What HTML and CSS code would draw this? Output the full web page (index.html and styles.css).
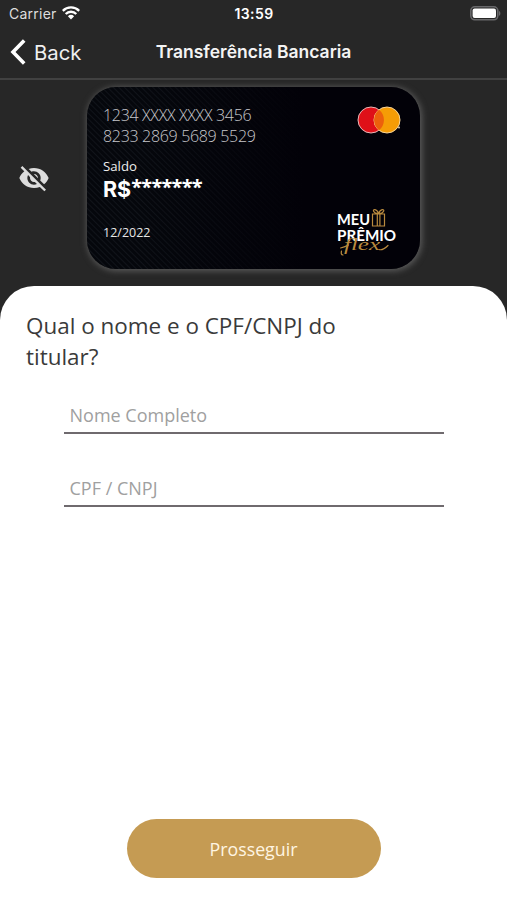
FILE: index.html
```html
<!DOCTYPE html>
<html lang="pt-BR">
<head>
    <meta charset="UTF-8">
    <meta name="viewport" content="width=device-width, initial-scale=1.0">
    <title>Transferência Bancaria</title>
    <link rel="stylesheet" href="styles.css">
</head>
<body>

    <!-- STATUS BAR -->
    <div class="status-bar">
        <div class="carrier">
            <span class="carrier-name">Carrier</span>
            <svg class="wifi" width="18" height="14" viewBox="0 0 18 14">
                <path d="M0.8 4.8a11.6 11.6 0 0 1 16.4 0M3.7 8a7.5 7.5 0 0 1 10.6 0" fill="none" stroke="#fff" stroke-width="2.4"/>
                <path d="M5.9 10.3a4.5 4.5 0 0 1 6.2 0L9 13.5z" fill="#fff"/>
            </svg>
        </div>
        <div class="clock">13:59</div>
        <svg class="battery" width="31" height="15" viewBox="0 0 31 15">
            <rect x="0.8" y="0.8" width="27" height="13" rx="4" fill="none" stroke="#68686a" stroke-width="1.6"/>
            <rect x="2.6" y="2.5" width="23.4" height="9.6" rx="2" fill="#fff"/>
            <path d="M29 5c1.8.6 1.8 4.2 0 4.8z" fill="#68686a"/>
        </svg>
    </div>

    <!-- NAVIGATION -->
    <div class="nav-bar">
        <div class="back">
            <svg width="17" height="28" viewBox="0 0 17 28">
                <path d="M14.2 2.5L3 14l11.2 11.5" fill="none" stroke="#fff" stroke-width="3.6"/>
            </svg>
            <span class="back-text">Back</span>
        </div>
        <h1>Transferência Bancaria</h1>
    </div>

    <!-- CARD -->
    <div class="card-area">
        <svg class="eye" width="32" height="32" viewBox="0 0 24 24" fill="#dcdcdc">
            <path d="M12 7c2.76 0 5 2.24 5 5 0 .65-.13 1.26-.36 1.83l2.92 2.92c1.51-1.26 2.7-2.89 3.43-4.75-1.73-4.39-6-7.5-11-7.5-1.4 0-2.74.25-3.98.7l2.16 2.16C10.74 7.13 11.35 7 12 7zM2 4.27l2.28 2.28.46.46C3.08 8.3 1.78 10.02 1 12c1.73 4.39 6 7.5 11 7.5 1.55 0 3.03-.3 4.38-.84l.42.42L19.73 22 21 20.73 3.27 3 2 4.27zM7.53 9.8l1.55 1.55c-.05.21-.08.43-.08.65 0 1.66 1.34 3 3 3 .22 0 .44-.03.65-.08l1.55 1.55c-.67.33-1.41.53-2.2.53-2.76 0-5-2.24-5-5 0-.79.2-1.53.53-2.2zm4.31-.78l3.15 3.15.02-.16c0-1.66-1.34-3-3-3l-.17.01z"/>
        </svg>
        <div class="card">
            <div class="card-info">
                <div class="card-number">1234 XXXX XXXX 3456</div>
                <div class="card-number">8233 2869 5689 5529</div>
                <div class="balance-label">Saldo</div>
                <div class="balance">R$<span class="stars">*******</span></div>
                <div class="expiry">12/2022</div>
            </div>
            <div class="card-brands">
                <svg class="mastercard" width="44" height="28" viewBox="0 0 44 28">
                    <circle cx="14" cy="14" r="13" fill="#df1018" stroke="#e8b8b8" stroke-width="1"/>
                    <circle cx="30" cy="14" r="13" fill="#f59c06" stroke="#f8d59a" stroke-width="1"/>
                    <path d="M22 3.8a13 13 0 0 1 0 20.4a13 13 0 0 1 0-20.4z" fill="#ec600c"/>
                    <circle cx="42" cy="21.5" r="0.9" fill="#f3dfbf"/>
                </svg>
                <svg class="premio" width="62" height="50" viewBox="0 0 62 50">
                    <g class="premio-text">
                        <text x="1" y="16" textLength="33" lengthAdjust="spacingAndGlyphs">MEU</text>
                        <text x="1" y="32" textLength="59" lengthAdjust="spacingAndGlyphs">PRÊMIO</text>
                    </g>
                    <g fill="none" stroke="#b98a3e" stroke-width="1.2" stroke-linecap="round">
                        <path d="M36.5 5h12v12h-12zM41.3 5v12M43.9 5v12M42.6 4.5c-2-5-6-4.5-5-2.2s4 2.2 5 2.2c2-5 6-4.5 5-2.2s-4 2.2-5 2.2"/>
                        <path d="M4.500 39c5-1 6-2 8-3M7 46c-2 0-2-2-1.500-4M43 40.500c3 1 6-1 9-4"/>
                    </g>
                    <text class="flex-text" x="8" y="41" textLength="36" lengthAdjust="spacingAndGlyphs">flex</text>
                </svg>
            </div>
        </div>
    </div>

    <!-- FORM -->
    <div class="sheet">
        <h2>Qual o nome e o CPF/CNPJ do titular?</h2>
        <input type="text" class="field" placeholder="Nome Completo">
        <input type="text" class="field" placeholder="CPF / CNPJ">
        <button class="submit-button">Prosseguir</button>
    </div>

</body>
</html>
```

FILE: styles.css
```css
* {
    box-sizing: border-box;
}
body {
    font-family: "Open Sans", "Noto Sans", sans-serif;
    margin: 0;
    background-color: #272727;
    height: 900px;
    display: flex;
    flex-direction: column;
    overflow: hidden;
}
.status-bar {
    height: 28px;
    padding: 0 6px 2px 9px;
    display: grid;
    grid-template-columns: 1fr auto 1fr;
    align-items: center;
    font-family: Inter, sans-serif;
    color: #fff;
}
.carrier {
    display: flex;
    align-items: center;
    gap: 5px;
    font-size: 14px;
    color: #dedede;
}
.carrier-name {
    letter-spacing: 0.25px;
}
.clock {
    font-size: 14px;
    font-weight: 600;
    letter-spacing: 0.4px;
    margin-right: 2px;
}
.battery {
    justify-self: end;
}
.nav-bar {
    height: 52px;
    padding: 0 10px 3px;
    border-bottom: 2px solid #414141;
    display: grid;
    grid-template-columns: 1fr auto 1fr;
    align-items: center;
    font-family: Inter, sans-serif;
    color: #fff;
}
.back {
    display: flex;
    align-items: center;
    gap: 7px;
    padding-top: 1px;
}
.back-text {
    font-size: 20.3px;
    color: #f0f0f0;
}
h1 {
    margin: 0;
    font-size: 17.5px;
    font-weight: 600;
    color: #f4f4f4;
}
.card-area {
    height: 206px;
    padding: 7px 0 0 18px;
    display: flex;
    align-items: flex-start;
    gap: 37px;
}
.eye {
    margin-top: 75px;
}
.card {
    width: 333px;
    height: 182px;
    padding: 18px 19px 10px 16px;
    border-radius: 29px;
    display: flex;
    justify-content: space-between;
    background: linear-gradient(90deg, rgba(2, 1, 8, 0) 15%, #020108 65%), repeating-linear-gradient(45deg, #05070c 0, #05070c 2px, #11141a 3px, #05070c 4px);
    box-shadow: 1px 1px 6px 1px #5c5c5c;
    color: #fff;
}
.card-info {
    display: flex;
    flex-direction: column;
    white-space: nowrap;
}
.card-number {
    font-size: 16px;
    font-weight: 300;
    line-height: 21px;
    letter-spacing: -0.32px;
    color: #c8c8cc;
}
.balance-label {
    margin-top: 10px;
    font-size: 13.2px;
    line-height: 18px;
    color: #eee;
}
.balance {
    display: flex;
    font-family: Inter, sans-serif;
    font-size: 21.5px;
    font-weight: 700;
    line-height: 28px;
}
.stars {
    margin-top: -2px;
    font-family: "Open Sans", sans-serif;
    font-size: 20px;
    letter-spacing: -0.8px;
}
.expiry {
    margin-top: 21px;
    font-size: 12.5px;
    line-height: 17px;
    color: #e6e6e6;
}
.card-brands {
    display: flex;
    flex-direction: column;
    justify-content: space-between;
    align-items: flex-end;
}
.mastercard {
    margin-top: 1px;
}
.premio {
    margin-right: 3px;
}
.premio-text {
    font-family: Lato, sans-serif;
    font-size: 16px;
    font-weight: 700;
    fill: #fff;
}
.flex-text {
    font-family: "Liberation Serif", serif;
    font-size: 16px;
    font-style: italic;
    fill: #b98a3e;
}
.sheet {
    flex: 1;
    padding: 25px 26px 22px;
    border-radius: 34px 34px 0 0;
    background-color: #fff;
    display: flex;
    flex-direction: column;
    align-items: center;
}
h2 {
    align-self: flex-start;
    width: 340px;
    margin: 0 0 24px;
    font-size: 22.45px;
    font-weight: 400;
    line-height: 30.5px;
    color: #3a3a3a;
}
.field {
    width: 380px;
    height: 38px;
    margin-bottom: 35px;
    padding: 1px 6px 0;
    border: none;
    border-bottom: 2px solid #6f6a6e;
    border-radius: 0;
    background: none;
    font-family: inherit;
    font-size: 18px;
    color: #3a3a3a;
    outline: none;
}
.field::placeholder {
    color: #a0a0a0;
}
.submit-button {
    width: 254px;
    height: 59px;
    margin-top: auto;
    border: none;
    border-radius: 30px;
    background-color: #c59b53;
    color: #fff5e2;
    font-family: inherit;
    font-size: 17.8px;
    cursor: pointer;
}
```
